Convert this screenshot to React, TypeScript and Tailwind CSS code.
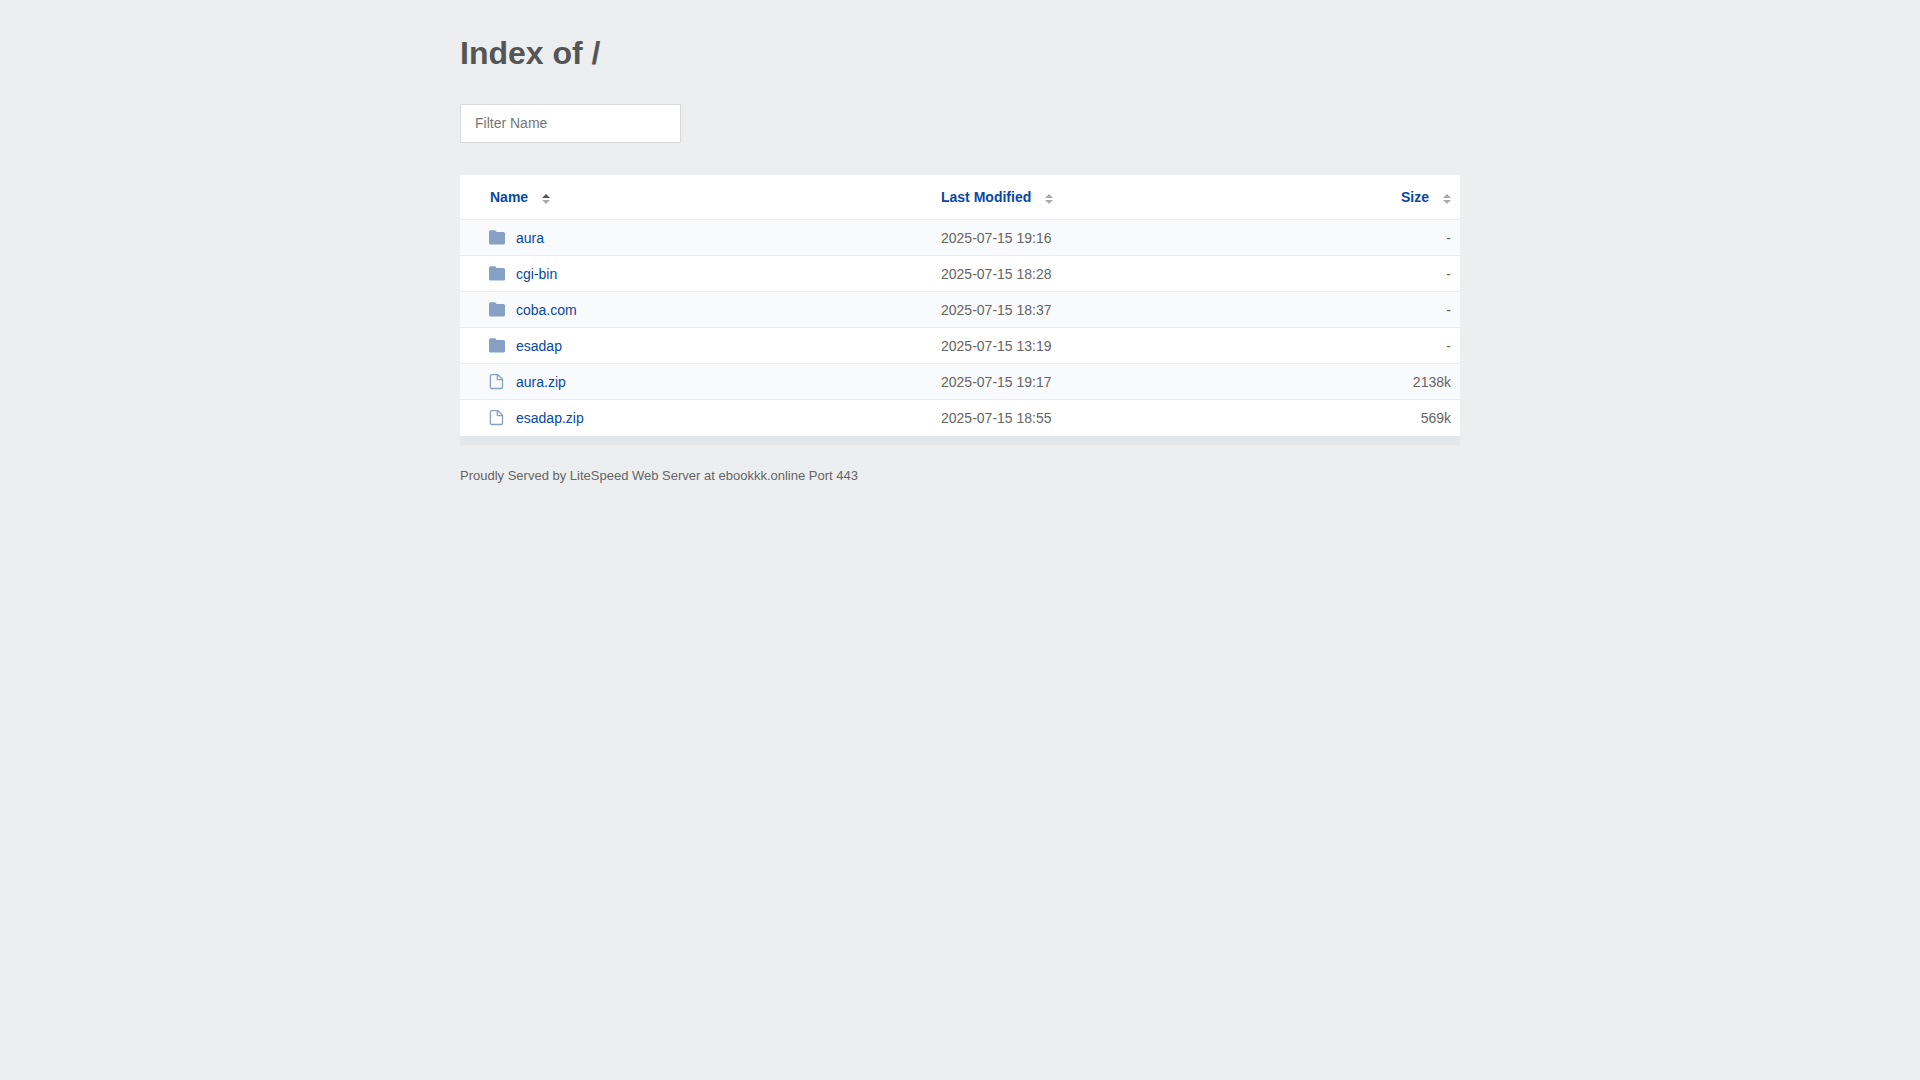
import { useState } from "react";

type Entry = { name: string; modified: string; size: string; kind: "folder" | "file" };

const entries: Entry[] = [
  { name: "aura", modified: "2025-07-15 19:16", size: "-", kind: "folder" },
  { name: "cgi-bin", modified: "2025-07-15 18:28", size: "-", kind: "folder" },
  { name: "coba.com", modified: "2025-07-15 18:37", size: "-", kind: "folder" },
  { name: "esadap", modified: "2025-07-15 13:19", size: "-", kind: "folder" },
  { name: "aura.zip", modified: "2025-07-15 19:17", size: "2138k", kind: "file" },
  { name: "esadap.zip", modified: "2025-07-15 18:55", size: "569k", kind: "file" },
];

function FolderIcon() {
  return (
    <svg className="h-4 w-4 shrink-0" viewBox="0 0 16 16" fill="#86a0c6" aria-hidden="true">
      <path d="M0 1.800A1.600 1.600 0 0 1 1.600 .200H5.200C6.600 .200 7 .900 7.200 1.400C7.400 1.900 7.700 2 8.200 2H14.400A1.600 1.600 0 0 1 16 3.600V12.900A1.600 1.600 0 0 1 14.400 14.500H1.600A1.600 1.600 0 0 1 0 12.900z" />
    </svg>
  );
}

function FileIcon() {
  return (
    <svg className="h-4 w-4 shrink-0" viewBox="0 0 16 16" fill="none" stroke="#86a0c6" strokeWidth="1.3" strokeLinejoin="round" aria-hidden="true">
      <path d="M2.700 .700H9L13.500 5.200V13.200A1.300 1.300 0 0 1 12.200 14.500H2.700A1.300 1.300 0 0 1 1.400 13.200V2A1.300 1.300 0 0 1 2.700 .700z" />
      <path d="M8.300 .900V5.600H13.300" />
    </svg>
  );
}

function SortIcon({ ascending = false }: { ascending?: boolean }) {
  return (
    <svg className="mt-1 h-[10px] w-2 shrink-0" viewBox="0 0 8 10" aria-hidden="true">
      <path d="M4 0l4 4H0z" fill={ascending ? "#555" : "#aaa"} />
      <path d="M0 6h8l-4 4z" fill="#aaa" />
    </svg>
  );
}

function SortButton({ label, ascending }: { label: string; ascending?: boolean }) {
  return (
    <button type="button" className="inline-flex h-5 cursor-pointer items-center gap-[14px] font-bold text-[#0748a6]">
      {label}
      <SortIcon ascending={ascending} />
    </button>
  );
}

export default function App() {
  const [filter, setFilter] = useState("");
  const shown = entries.filter((e) => e.name.toLowerCase().includes(filter.toLowerCase()));

  return (
    <div className="min-h-screen bg-[#edeef0] px-5 py-8 font-['Liberation_Sans',Arial,sans-serif] text-sm text-[#656565]">
      <main className="mx-auto max-w-[1000px]">
        <h1 className="text-[32px] leading-[42px] font-bold text-[#555]">Index of /</h1>
        <input
          type="text"
          aria-label="Filter Name"
          placeholder="Filter Name"
          value={filter}
          onChange={(e) => setFilter(e.target.value)}
          className="mt-[30px] block h-[39px] w-[221px] border border-[#d8dadc] bg-white px-[14px] pb-[2px] text-sm outline-none placeholder:text-[#757575]"
        />
        <table className="mt-8 w-full table-fixed border-separate border-spacing-0 border-b-[9px] border-[#e3e7ea] bg-white text-left">
          <thead>
            <tr className="h-[45px] *:border-b *:border-[#e9ebee] *:align-middle">
              <th scope="col" aria-sort="ascending" className="w-[47%] pl-[30px]">
                <SortButton label="Name" ascending />
              </th>
              <th scope="col" className="w-[38%] pl-[11px]">
                <SortButton label="Last Modified" />
              </th>
              <th scope="col" className="pr-[9px] text-right">
                <SortButton label="Size" />
              </th>
            </tr>
          </thead>
          <tbody>
            {shown.map((e) => (
              <tr key={e.name} className="h-9 odd:bg-[#f9fafc] *:border-b *:border-[#e9ebee] *:py-0 last:*:border-b-0">
                <td className="pl-[29px]">
                  <a href="#" className="flex items-center gap-[11px] leading-5 text-[#0748a6]">
                    {e.kind === "folder" ? <FolderIcon /> : <FileIcon />}
                    {e.name}
                  </a>
                </td>
                <td className="pb-px pl-[11px]">{e.modified}</td>
                <td className="pr-[9px] pb-px text-right">{e.size}</td>
              </tr>
            ))}
          </tbody>
        </table>
        <footer className="mt-[19px] text-[13px] leading-6">
          Proudly Served by LiteSpeed Web Server at ebookkk.online Port 443
        </footer>
      </main>
    </div>
  );
}
